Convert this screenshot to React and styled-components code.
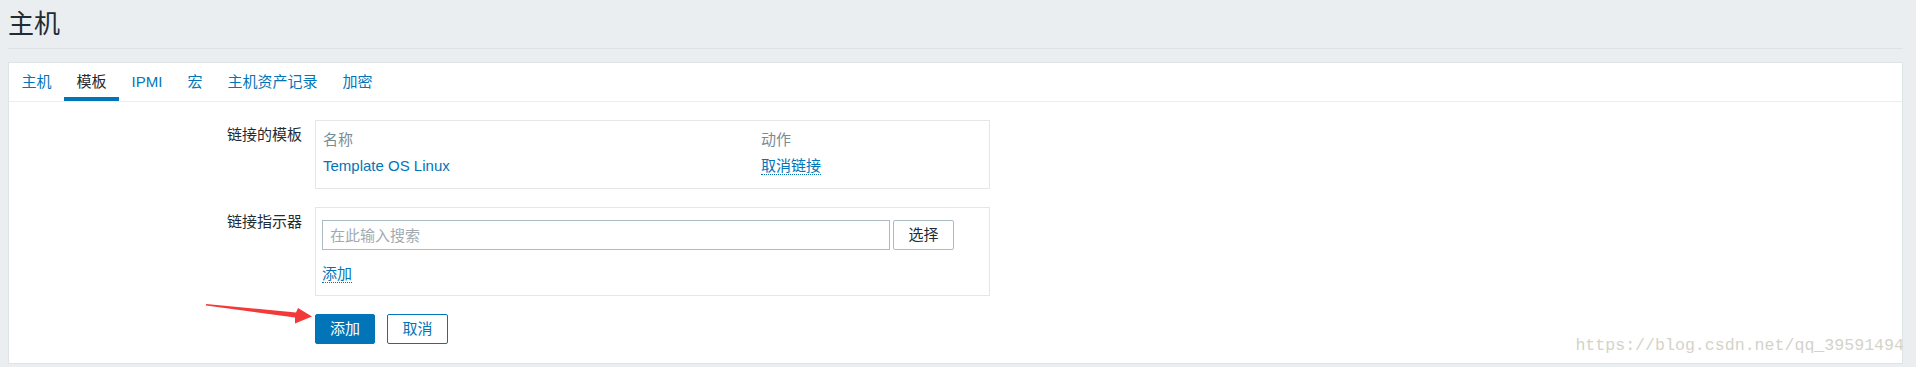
import React from "react";
import styled, { createGlobalStyle } from "styled-components";

const GlobalStyle = createGlobalStyle`
  body {
    margin: 0;
    background: #ebeef0;
    font-family: "Liberation Sans", "Noto Sans CJK SC", sans-serif;
    font-size: 15px;
    color: #1f2c33;
  }
`;

const Page = styled.div`
  position: relative;
  padding: 0 13px 0 8px;
`;

const Header = styled.div`
  padding: 9px 0;
  border-bottom: 1px solid #dde2e5;
`;

const Title = styled.h1`
  margin: 0;
  font-size: 26px;
  font-weight: normal;
  line-height: 30px;
  color: #1f2c33;
`;

const Card = styled.div`
  position: relative;
  margin-top: 13px;
  background: #fff;
  border: 1px solid #dfe4e7;
`;

const Tabs = styled.div`
  display: flex;
  border-bottom: 1px solid #ebeef0;
`;

const Tab = styled.div`
  padding: 10px 12.5px 6px;
  line-height: 18px;
  border-bottom: 4px solid ${(p) => (p.$active ? "#0275b8" : "transparent")};
  color: ${(p) => (p.$active ? "#1f2c33" : "#0275b8")};
`;

const Form = styled.div`
  display: grid;
  grid-template-columns: 293px 675px;
  column-gap: 13px;
  row-gap: 18px;
  padding: 18px 0 19px;
`;

const Label = styled.div`
  text-align: right;
  padding-top: 6px;
  line-height: 18px;
  color: #1f2c33;
`;

const Box = styled.div`
  border: 1px solid #e3e7ea;
  padding: ${(p) => p.$pad};
`;

const Table = styled.div`
  display: grid;
  grid-template-columns: 438px 1fr;
`;

const Cell = styled.div`
  padding: 4px 0;
  line-height: 18px;
  color: ${(p) => (p.$head ? "#768d99" : "#1f2c33")};
`;

const Link = styled.span`
  color: #0275b8;
  border-bottom: ${(p) => (p.$dotted ? "1px dotted #0275b8" : "none")};
  cursor: pointer;
`;

const SearchRow = styled.div`
  display: flex;
  gap: 3px;
`;

const Input = styled.input`
  box-sizing: border-box;
  width: 568px;
  height: 30px;
  border: 1px solid #acbbc2;
  padding: 0 7px;
  font: inherit;
  color: #1f2c33;
  outline: none;
  &::placeholder {
    color: #a3abb0;
  }
`;

const Button = styled.button`
  box-sizing: border-box;
  width: ${(p) => p.$w || "61px"};
  height: 30px;
  padding: 0;
  font: inherit;
  line-height: 18px;
  border-radius: 2px;
  cursor: pointer;
  border: 1px solid ${(p) => (p.$kind === "plain" ? "#acbbc2" : "#0275b8")};
  background: ${(p) => (p.$kind === "primary" ? "#0275b8" : "#fff")};
  color: ${(p) =>
    p.$kind === "primary" ? "#fff" : p.$kind === "plain" ? "#1f2c33" : "#0275b8"};
`;

const AddLine = styled.div`
  margin-top: 15px;
  line-height: 18px;
`;

const Actions = styled.div`
  display: flex;
  gap: 12px;
`;

const Watermark = styled.div`
  position: absolute;
  right: -2px;
  bottom: 7px;
  font-family: "Liberation Mono", monospace;
  font-size: 16.6px;
  line-height: 20px;
  color: #d3d3ca;
  pointer-events: none;
`;

const Arrow = styled.svg`
  position: absolute;
  left: 200px;
  top: 300px;
`;

const tabs = ["主机", "模板", "IPMI", "宏", "主机资产记录", "加密"];

export default function App() {
  return (
    <>
      <GlobalStyle />
      <Page>
        <Header>
          <Title>主机</Title>
        </Header>
        <Card>
          <Tabs>
            {tabs.map((t) => (
              <Tab key={t} $active={t === "模板"}>
                {t}
              </Tab>
            ))}
          </Tabs>
          <Form>
            <Label>链接的模板</Label>
            <Box $pad="6px 7px 9px">
              <Table>
                <Cell $head>名称</Cell>
                <Cell $head>动作</Cell>
                <Cell>
                  <Link>Template OS Linux</Link>
                </Cell>
                <Cell>
                  <Link $dotted>取消链接</Link>
                </Cell>
              </Table>
            </Box>

            <Label>链接指示器</Label>
            <Box $pad="12px 6px 12px">
              <SearchRow>
                <Input placeholder="在此输入搜索" />
                <Button $kind="plain">选择</Button>
              </SearchRow>
              <AddLine>
                <Link $dotted>添加</Link>
              </AddLine>
            </Box>

            <div />
            <Actions>
              <Button $kind="primary" $w="60px">添加</Button>
              <Button>取消</Button>
            </Actions>
          </Form>
          <Watermark>https://blog.csdn.net/qq_39591494</Watermark>
        </Card>
        <Arrow width="120" height="30" viewBox="0 0 120 30">
          <polygon
            points="6,4 96,12.5 98,8 112,16.5 95,23.5 95,17.5 6,5.5"
            fill="#f23a3a"
          />
        </Arrow>
      </Page>
    </>
  );
}
